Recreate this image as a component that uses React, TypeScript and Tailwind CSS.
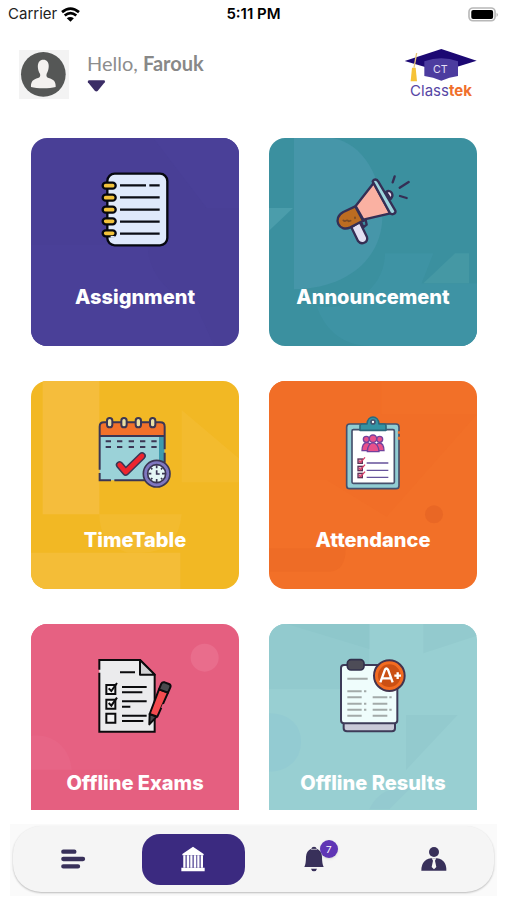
import type {ReactNode} from 'react';

type Tile = {
  label: string;
  className: string;
  pattern: ReactNode;
  icon: ReactNode;
};

function NotebookIcon() {
  return (
    <svg viewBox="231 126 228 228" className="size-[76px]" aria-hidden="true">
      <rect x="262" y="131" width="180" height="215" rx="22" fill="#dfe9fb" stroke="#06080f" strokeWidth="7" />
      <path d="M300 166h78M388 166h31M300 202h119M300 239h119M300 275h119M300 311h119" stroke="#0b0d14" strokeWidth="7" />
      {[167, 203, 239, 274, 310].map((y) => (
        <rect key={y} x="248" y={y - 9} width="39" height="18" rx="9" fill="#f3c33b" stroke="#06080f" strokeWidth="7" />
      ))}
      <path d="M272 318h12v5h-12z" fill="#dfe9fb" />
    </svg>
  );
}

function MegaphoneIcon() {
  return (
    <svg viewBox="225 126 228 228" className="size-[76px]" aria-hidden="true">
      <g stroke="#352f55" strokeWidth="7" strokeLinejoin="round" strokeLinecap="round">
        <path d="M303 275l14-5 3 14-10 8z" fill="#3c8fa0" />
        <path d="M274 292l20 41c10 13 31 5 27-12l-22-45z" fill="#e3e0f2" />
        <path d="M378 186c14-10 26 8 14 21z" fill="#f0e6f6" />
        <path d="M286 229l-36 17c-34 18-13 62 21 46l38-20z" fill="#bc6c21" />
        <path d="M341 159l50 91-81 19-23-41z" fill="#fab1a2" />
        <path d="M338 154c3-8 13-7 17 1l51 87c3 9-11 15-17 6z" fill="#9ed5dd" />
        <path d="M404 139l-6 18M446 156l-27 17M420 198l20 6" fill="none" />
      </g>
      <path d="M250 271q4 4 8 1t8 2l6-2M285 262v3" fill="none" stroke="#7a4a25" strokeWidth="5" strokeLinecap="round" />
    </svg>
  );
}

function CalendarIcon() {
  return (
    <svg viewBox="231 135 228 228" className="size-[76px]" aria-hidden="true">
      <path d="M239 200h194v131H239z" fill="#9bd2d8" />
      <path d="M417 200h16v80h-16z" fill="#3e9aac" />
      <path d="M239 198v-28q0-13 13-13h169q13 0 13 13v28z" fill="#f2712a" />
      <path
        d="M239 299V170q0-13 13-13h169q13 0 13 13v68M434 248v30M239 198h195M239 309v22h34M283 331h95"
        fill="none"
        stroke="#3b3654"
        strokeWidth="6"
      />
      {[269, 312, 355, 398].map((x) => (
        <rect key={x} x={x - 8} y="144" width="16" height="28" rx="8" fill="#e9dfa6" stroke="#3b3654" strokeWidth="6" />
      ))}
      <path d="M257 214h16M291 214h16M326 214h16M360 214h16M394 214h16M257 231h16M291 231h16M326 231h16M360 231h16M394 231h16" stroke="#3b3654" strokeWidth="6" />
      <path d="M299 285l18 21 49-48" fill="none" stroke="#3b3654" strokeWidth="23" strokeLinecap="round" strokeLinejoin="round" />
      <path d="M299 285l18 21 49-48" fill="none" stroke="#ee252e" strokeWidth="14" strokeLinecap="round" strokeLinejoin="round" />
      <circle cx="410" cy="311" r="40" fill="#7f77c0" stroke="#3b3654" strokeWidth="5" />
      <circle cx="410" cy="311" r="27" fill="#e5f7f6" stroke="#3b3654" strokeWidth="5" />
      <path d="M410 286v9M410 327v9M385 311h9M426 311h9M393 294l4 4M427 294l-4 4M393 328l4-4M427 328l-4-4M410 301v11h9" fill="none" stroke="#3b3654" strokeWidth="5" />
    </svg>
  );
}

function ClipboardIcon() {
  return (
    <svg viewBox="225 135 228 228" className="size-[76px]" aria-hidden="true">
      <rect x="260" y="162" width="157" height="194" rx="9" fill="#91cdd3" stroke="#46506c" strokeWidth="5" />
      <path d="M417 184v7M417 200v9" stroke="#f2712a" strokeWidth="7" />
      <rect x="276" y="179" width="127" height="161" rx="4" fill="#fff" stroke="#46506c" strokeWidth="5" />
      <path d="M300 181v-13q0-6 6-6h15c2-28 34-28 36 0h15q6 0 6 6v13z" fill="#3493a4" stroke="#2d687c" strokeWidth="5" strokeLinejoin="round" />
      <circle cx="339" cy="156" r="6" fill="#fff" stroke="#46506c" strokeWidth="5" />
      <g fill="#e8508b" stroke="#73419b" strokeWidth="4">
        <circle cx="319" cy="208" r="9" />
        <circle cx="359" cy="208" r="9" />
        <path d="M306 242c0-30 26-31 29-8v8zM344 242c0-30 27-31 28 0z" />
        <circle cx="339" cy="206" r="11" />
        <path d="M322 245c0-35 34-35 35 0z" />
      </g>
      <path d="M320 279h65M320 301h65M320 322h65" stroke="#66529a" strokeWidth="4" />
      {[273, 295, 316].map((y) => (
        <g key={y}>
          <rect x="294" y={y - 6} width="13" height="13" fill="#e7a1b9" stroke="#5d3257" strokeWidth="4" />
          <path d={`M297 ${y}l5 4 13-15`} fill="none" stroke="#d83e69" strokeWidth="4" />
        </g>
      ))}
    </svg>
  );
}

function ExamIcon() {
  return (
    <svg viewBox="231 129 228 228" className="size-[76px]" aria-hidden="true">
      <path d="M238 135h122l44 44v171H238z" fill="#ebebed" />
      <path d="M238 164v-29h122l44 44v171H238V173" fill="none" stroke="#0b0b0d" strokeWidth="6" />
      <path d="M360 135v44h44z" fill="#d1d1d3" stroke="#0b0b0d" strokeWidth="6" strokeLinejoin="round" />
      <path d="M300 172h45M306 216h74M306 232h61M306 259h74M306 275h25M306 302h74M306 318h64" stroke="#0b0b0d" strokeWidth="6" />
      <path d="M259 210h27v27h-27zM259 254h27v27h-27zM259 296h27v27h-27z" fill="#f4f4f5" stroke="#0b0b0d" strokeWidth="6" />
      <path d="M266 220l8 8 17-24M266 264l8 8 17-24" fill="none" stroke="#0b0b0d" strokeWidth="6" />
      <g stroke="#0b0b0d" strokeWidth="6" strokeLinejoin="round">
        <path d="M388 328l1-31 21 8z" fill="#48494d" />
        <path d="M389 297l28-74 27 10-32 72z" fill="#f34b4f" />
        <path d="M417 223l7-17q3-6 10-4l13 5q7 3 4 10l-7 16z" fill="#48494d" />
      </g>
      <path d="M427 280l5-12" stroke="#e75f83" strokeWidth="8" />
    </svg>
  );
}

function ResultIcon() {
  return (
    <svg viewBox="225 129 228 228" className="size-[76px]" aria-hidden="true">
      <path d="M251 319h154v21q0 9-9 9H261q-10 0-10-9z" fill="#c9cad8" stroke="#3d3b58" strokeWidth="6" />
      <rect x="243" y="150" width="169" height="175" rx="9" fill="#effdfc" stroke="#3d3b58" strokeWidth="6" />
      <path d="M262 191h61M262 229h43M262 247h43M262 266h43M262 284h43M262 302h43M338 247h44M338 266h44M338 284h44M338 302h44" stroke="#a3aaa9" strokeWidth="6" />
      <path d="M312 229h7M312 266h7M312 284h7M388 247h7M388 284h7" stroke="#a3aaa9" strokeWidth="6" />
      <rect x="262" y="134" width="50" height="31" rx="11" fill="#4d4c57" stroke="#32304c" strokeWidth="5" />
      <circle cx="388" cy="182" r="46" fill="#f36c21" stroke="#44334d" strokeWidth="6" />
      <circle cx="388" cy="182" r="34" fill="#cb5014" />
      <path d="M361 202l14-38q4-7 9 0l14 38M367 190h25M413 172v20M403 182h20" fill="none" stroke="#fff" strokeWidth="7" strokeLinejoin="round" />
    </svg>
  );
}

function Pattern({viewBox, children}: {viewBox: string; children: ReactNode}) {
  return (
    <svg viewBox={viewBox} className="absolute inset-0 size-full" aria-hidden="true">
      {children}
    </svg>
  );
}

const tiles: Tile[] = [
  {
    label: 'Assignment',
    className: 'bg-[#493f96]',
    pattern: (
      <Pattern viewBox="33 24 624 624">
        <path d="M33 345h350c0 70 50 150 140 170l60 133H33z" fill="#4a4098" />
        <path d="M400 24h257v210H560z" fill="#4a4098" />
      </Pattern>
    ),
    icon: <NotebookIcon />,
  },
  {
    label: 'Announcement',
    className: 'bg-[#3b909f]',
    pattern: (
      <Pattern viewBox="27 24 624 624">
        <path d="M102 24h115c90 15 150 115 150 235S270 475 102 478z" fill="#4696a9" />
        <path d="M27 234h72l-72 68z" fill="#4b9dab" />
        <path d="M375 370h145l-35 90h166v188H330c-90 0-140-60-160-120 110 20 205-60 205-158z" fill="#3e93a4" />
        <path d="M490 460l95-90h42v90z" fill="#4598a4" />
      </Pattern>
    ),
    icon: <MegaphoneIcon />,
  },
  {
    label: 'TimeTable',
    className: 'bg-[#f2b824]',
    pattern: (
      <Pattern viewBox="33 33 624 624">
        <path d="M68 33h170v400H68z" fill="#f5bd3c" />
        <path d="M485 120l171 145v72H485z" fill="#f3bb2e" />
        <path d="M238 433h247q-10 115-120 115h-42q-85-25-85-115z" fill="#f3bb2f" />
        <path d="M33 548h448v109H33z" fill="#f4bd37" />
      </Pattern>
    ),
    icon: <CalendarIcon />,
  },
  {
    label: 'Attendance',
    className: 'bg-[#f27028]',
    pattern: (
      <Pattern viewBox="27 33 624 624">
        <path d="M365 33v100h286L380 440 200 330H27V33z" fill="#f16e27" />
        <circle cx="522" cy="433" r="27" fill="#e96725" />
        <path d="M27 535h230q0 70-50 70H27z" fill="#ee6c26" />
      </Pattern>
    ),
    icon: <ClipboardIcon />,
  },
  {
    label: 'Offline Exams',
    className: 'bg-[#e55f80]',
    pattern: (
      <Pattern viewBox="33 27 624 624">
        <path d="M33 27h267v437H33z" fill="#e66182" />
        <circle cx="554" cy="128" r="42" fill="#e96d8c" />
        <path d="M33 363c70-10 118 40 122 101H33z" fill="#e76586" />
      </Pattern>
    ),
    icon: <ExamIcon />,
  },
  {
    label: 'Offline Results',
    className: 'bg-[#98cfd2]',
    pattern: (
      <Pattern viewBox="27 27 624 624">
        <path d="M27 27h301v196H27z" fill="#92cace" />
        <path d="M80 27h248v75z" fill="#8ec7cb" />
        <path d="M490 27h161v35L490 115zM438 300h155L438 465z" fill="#93cace" />
        <path d="M27 295c60 0 96 35 96 85s-36 90-96 90z" fill="#93cbd2" />
        <path d="M328 583q30-70 130-70l-70 70z" fill="#94cad0" />
      </Pattern>
    ),
    icon: <ResultIcon />,
  },
];

function StatusBar() {
  return (
    <div className="grid h-7 grid-cols-3 items-center px-2 text-[15px] leading-5 text-[#222]">
      <div className="flex items-center gap-1">
        <span>Carrier</span>
        <svg viewBox="186 16 56 44" className="h-[15px] w-[19px]" aria-hidden="true">
          <path d="M189 31q25-21 50 0M197 41q17-14 34 0" fill="none" stroke="#000" strokeWidth="8" />
          <path d="M203 49q10-8 21 0l-10 10z" fill="#000" />
        </svg>
      </div>
      <div className="text-center font-semibold text-black">5:11 PM</div>
      <svg viewBox="648 15 93 46" className="h-[15px] w-[31px] justify-self-end" aria-hidden="true">
        <rect x="650" y="18" width="80" height="39" rx="12" fill="#fff" stroke="#b8b8b8" strokeWidth="5" />
        <rect x="657" y="24" width="67" height="28" rx="6" fill="#000" />
        <path d="M735 33q6 6 0 13z" fill="#999" />
      </svg>
    </div>
  );
}

function Header() {
  return (
    <header className="flex items-start justify-between pt-5 pr-[29px] pl-[19px]">
      <div className="mt-[2px] flex gap-[18px]">
        <svg viewBox="58 150 150 147" className="h-[49px] w-[50px]" role="img" aria-label="Profile photo">
          <path d="M58 150h150v147H58z" fill="#f3f3f3" />
          <circle cx="131" cy="223" r="67" fill="#555756" />
          <path d="M131 179c-22 0-18 30-10 42 2 6 0 11-6 13-14 4-22 10-21 27 18 5 56 5 74 0 1-17-7-23-21-27-6-2-8-7-6-13 8-12 12-42-10-42z" fill="#f3f1ef" />
        </svg>
        <div>
          <div className="font-[Lato,sans-serif] text-xl leading-[26px] text-[#8d8d8d]">
            Hello, <span className="font-bold text-[#888]">Farouk</span>
          </div>
          <button type="button" aria-label="Switch account" className="mt-1 block">
            <svg viewBox="259 238 57 37" className="h-3 w-[19px]" aria-hidden="true">
              <path d="M264 239h47q5 2 2 6l-22 27q-4 3-8 0l-22-27q-2-4 3-6z" fill="#3b2d66" />
            </svg>
          </button>
        </div>
      </div>
      <a href="#" className="flex flex-col items-center">
        <svg viewBox="450 144 222 102" className="h-[34px] w-[74px]" aria-hidden="true">
          <path d="M452 183l110-36 106 35-106 33z" fill="#1c0873" />
          <path d="M511 184q51-18 101 0v44q-26 4-50 14-24-10-51-14z" fill="#4c3c9f" />
          <path d="M488 159l-8 44" stroke="#e8c77a" strokeWidth="4" />
          <path d="M474 203h11l4 41h-19z" fill="#f6c237" />
          <text x="559" y="219" textAnchor="middle" fontSize="32" fill="#e4dff5">CT</text>
        </svg>
        <span className="text-[15px] leading-[18px] text-[#5646a5]">
          Class<b className="text-[#f0702c]">tek</b>
        </span>
      </a>
    </header>
  );
}

function NavBar() {
  return (
    <nav className="mx-[10px] mt-[14px] mb-1 bg-[#fafafa] px-[3px] pt-[2px] pb-1">
      <div className="grid h-[66px] grid-cols-4 items-center justify-items-center rounded-[28px] bg-[#f5f5f5] shadow-[0_1px_2px_#bbb]">
        <button type="button" aria-label="Menu">
          <svg viewBox="183 143 78 72" className="h-6 w-[26px]" aria-hidden="true">
            <path d="M193 157h33M193 179h59M193 201h44" stroke="#38305a" strokeWidth="13" strokeLinecap="round" />
          </svg>
        </button>
        <button type="button" aria-label="Home" className="flex h-[51px] w-[103px] items-center justify-center rounded-[18px] bg-[#3b2a80]">
          <svg viewBox="545 140 72 78" className="h-[26px] w-6" aria-hidden="true">
            <path d="M581 142l32 22v4h-64v-4zM546 205h70v11h-70z" fill="#fff" />
            <path d="M552 168h59v37h-59z" fill="#7a6fad" />
            <path d="M555 168v37M566 168v37M576 168v37M587 168v37M597 168v37M608 168v37" stroke="#fff" strokeWidth="6" />
          </svg>
        </button>
        <button type="button" aria-label="Notifications" className="relative">
          <svg viewBox="149 140 60 78" className="h-[26px] w-5" aria-hidden="true">
            <path d="M171 148q1-6 8-6t8 6q15 6 16 24 0 21 5 31h-58q5-10 5-31 1-18 16-24zM170 208h18q-2 8-9 8t-9-8z" fill="#38305a" />
            <path d="M170 150h18" stroke="#f5f5f5" strokeWidth="2" />
          </svg>
          <span className="absolute -top-[6px] left-4 flex size-[18px] items-center justify-center rounded-full bg-[#5f35b5] font-[Lato,sans-serif] text-[10px] leading-none text-white shadow-sm">
            7
          </span>
        </button>
        <button type="button" aria-label="Profile">
          <svg viewBox="500 140 78 78" className="size-[26px]" aria-hidden="true">
            <circle cx="539" cy="158" r="15" fill="#38305a" />
            <path d="M501 214q0-38 38-38t37 38z" fill="#38305a" />
            <path d="M532 177h14l-4 7 4 19-7 7-7-7 4-19z" fill="#f5f5f5" />
          </svg>
        </button>
      </div>
    </nav>
  );
}

export default function App() {
  return (
    <div className="flex h-screen flex-col bg-white font-[Inter,sans-serif]">
      <StatusBar />
      <Header />
      <main className="mt-[38px] grid min-h-0 flex-1 auto-rows-max grid-cols-2 gap-x-[30px] gap-y-[35px] overflow-y-auto pr-[30px] pl-[31px] [scrollbar-width:none]">
        {tiles.map((tile) => (
          <a
            key={tile.label}
            href="#"
            className={`relative flex aspect-square flex-col items-center overflow-hidden rounded-2xl pt-[34px] ${tile.className}`}
          >
            {tile.pattern}
            <div className="relative">{tile.icon}</div>
            <span className="relative mt-[35px] text-xl leading-7 font-extrabold whitespace-nowrap text-white">
              {tile.label}
            </span>
          </a>
        ))}
      </main>
      <NavBar />
    </div>
  );
}
